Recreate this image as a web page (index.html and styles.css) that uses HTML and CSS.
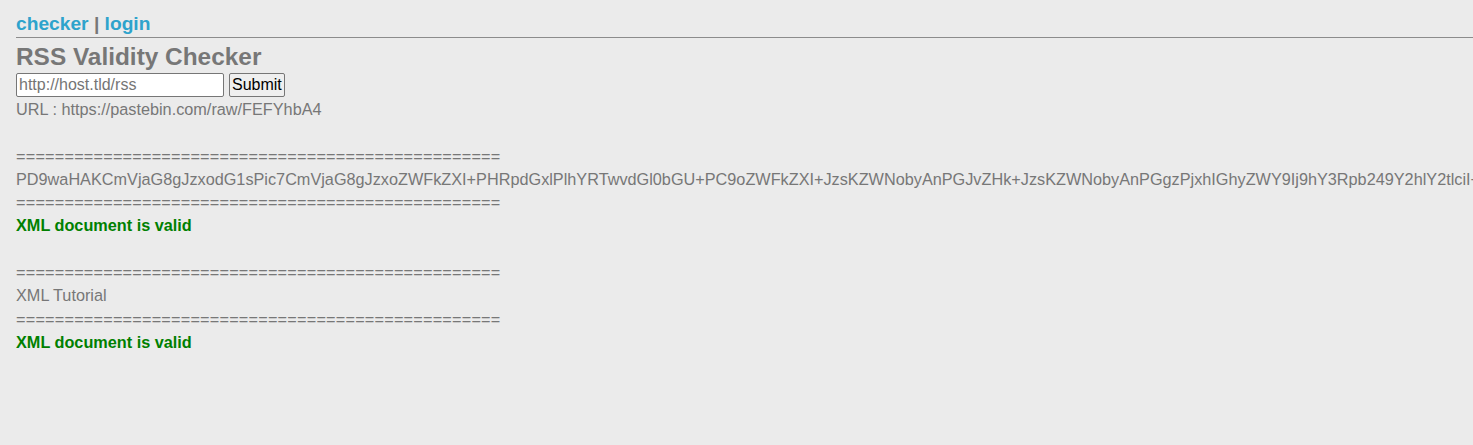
FILE: index.html
```html
<!DOCTYPE html>
<html>
<head>
<meta charset="utf-8">
<title>RSS Validity Checker</title>
<link rel="stylesheet" href="styles.css">
</head>
<body>
<h3 class="nav"><a href="?action=checker">checker</a> | <a href="?action=login">login</a></h3>
<h2 class="title">RSS Validity Checker</h2>
<form class="form">
<input class="url-input" type="text" name="url" placeholder="http://host.tld/rss"> <button class="submit" type="submit">Submit</button>
</form>
<div class="output">URL : https://pastebin.com/raw/FEFYhbA4<br><br><span class="sep">==================================================</span><br>PD9waHAKCmVjaG8gJzxodG1sPic7CmVjaG8gJzxoZWFkZXI+PHRpdGxlPlhYRTwvdGl0bGU+PC9oZWFkZXI+JzsKZWNobyAnPGJvZHk+JzsKZWNobyAnPGgzPjxhIGhyZWY9Ij9hY3Rpb249Y2hlY2tlciI+Y2hlY2tlcjwvYT4gfCA8YSBocmVmPSI/YWN0aW9uPWxvZ2luIj5sb2dpbjwvYT48L2gzPic7Cg==<br><span class="sep">==================================================</span><br><b class="valid">XML document is valid</b><br><br><span class="sep">==================================================</span><br>XML Tutorial<br><span class="sep">==================================================</span><br><b class="valid">XML document is valid</b></div>
</body>
</html>
```
FILE: styles.css
```css
html, body {
  background: #ebebeb;
}
body {
  margin: 0;
  padding: 0 16px;
  font-family: "Liberation Sans", Arial, sans-serif;
  color: #777777;
  overflow: hidden;
}
.nav {
  margin: 0 -16px 0 0;
  padding-top: 13px;
  padding-bottom: 3px;
  font-size: 19.2px;
  line-height: 21px;
  border-bottom: 1px solid #8c8c8c;
}
.nav a {
  color: #2ea3cc;
  text-decoration: none;
}
.title {
  margin: 3px 0 0 0;
  font-size: 24.4px;
  line-height: 32px;
}
.form {
  margin: 0;
  display: flex;
  align-items: stretch;
  gap: 5px;
  height: 24px;
}
.url-input {
  width: 208px;
  box-sizing: border-box;
  height: 24px;
  margin: 0;
  padding: 1px 2px;
  font-family: "Liberation Sans", Arial, sans-serif;
  font-size: 16px;
  border: 1px solid #767676;
  border-radius: 2px;
  background: #fff;
}
.url-input::placeholder {
  color: #757575;
}
.submit {
  margin: 0;
  padding: 1px 2px;
  height: 24px;
  font-family: "Liberation Sans", Arial, sans-serif;
  font-size: 16px;
  color: #000;
  background: #efefef;
  border: 1px solid #767676;
  border-radius: 2px;
}
.output {
  font-size: 16.25px;
  line-height: 23.3px;
  white-space: nowrap;
  margin-top: 1px;
}
.sep {
  letter-spacing: 0.2px;
}
.valid {
  color: #008000;
}
```
